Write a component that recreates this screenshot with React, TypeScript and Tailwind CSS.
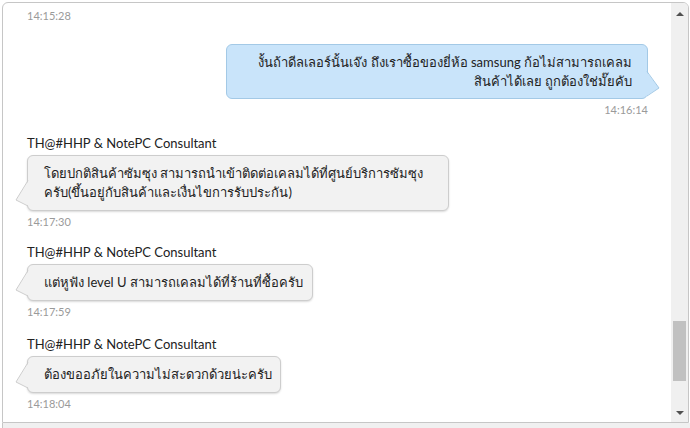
import React from 'react';

const FONT = { fontFamily: 'Lato, "Noto Sans", "Liberation Sans", sans-serif' };

function Stamp({ text, right = false, className = '' }: { text: string; right?: boolean; className?: string }) {
  return (
    <div className={`text-[11px] leading-[13px] text-[#9a9a9a] ${right ? 'text-right' : ''} ${className}`}>{text}</div>
  );
}

function Incoming({ name, lines, time, width }: { name: string; lines: string[]; time: string; width: string }) {
  return (
    <div className="flex flex-col items-start">
      <div className="text-[13px] leading-[16px] text-[#222]">{name}</div>
      <div className={`relative mt-[4px] ${width} rounded-[6px] border border-[#cdcdcd] bg-[#f2f2f2] pl-[16px] py-[8px] text-[13px] leading-[19px] text-[#222] whitespace-nowrap shadow-[0_1px_2px_rgba(0,0,0,0.15)]`}>
        {lines.map((l, i) => (
          <div key={i}>{l}</div>
        ))}
        {/* tail */}
        <svg className="absolute left-[-13px] bottom-[3px]" width="14" height="27" viewBox="0 0 14 27">
          <polygon points="14,0 1,20 14,26" fill="#f2f2f2" />
          <path d="M13 0.5 L1 20 L13 26" fill="none" stroke="#cdcdcd" strokeWidth="1" />
        </svg>
      </div>
      <Stamp text={time} className="mt-[4px]" />
    </div>
  );
}

export default function App() {
  return (
    <div className="w-[690px] h-[428px] bg-white overflow-hidden" style={FONT}>
      <div className="ml-[2px] mt-[2px] w-[687px] h-[421px] flex border border-[#c6c6c6] rounded-t-[6px] overflow-hidden">
        {/* messages */}
        <div className="flex-1 flex flex-col pl-[24px] pr-[20px] pt-[6px]">
          <Stamp text="14:15:28" />

          <div className="mt-[22px] flex flex-col items-end pr-[3px]">
            <div className="relative w-[422px] rounded-[6px] border border-[#a3c9e6] bg-[#c9e4fa] pl-[16px] pr-[15px] pt-[8px] pb-[7px] text-right text-[13px] leading-[19px] text-[#222] whitespace-nowrap">
              <div>งั้นถ้าดีลเลอร์นั้นเจ๊ง ถึงเราซื้อของยี่ห้อ samsung ก้อไม่สามารถเคลม</div>
              <div>สินค้าได้เลย ถูกต้องใช่มั๊ยคับ</div>
              <svg className="absolute right-[-13px] bottom-[1px]" width="14" height="26" viewBox="0 0 14 26">
                <polygon points="0,0 13,17 0,25" fill="#c9e4fa" />
                <path d="M1 0.5 L13 17 L1 25" fill="none" stroke="#a3c9e6" strokeWidth="1" />
              </svg>
            </div>
            <Stamp text="14:16:14" right className="mt-[4px] w-full" />
          </div>

          <div className="mt-[19px]">
            <Incoming
              name="TH@#HHP & NotePC Consultant"
              lines={[
                'โดยปกติสินค้าซัมซุง สามารถนำเข้าติดต่อเคลมได้ที่ศูนย์บริการซัมซุง',
                'ครับ(ขึ้นอยู่กับสินค้าและเงื่นไขการรับประกัน)',
              ]}
              time="14:17:30"
              width="w-[422px]"
            />
          </div>
          <div className="mt-[16px]">
            <Incoming
              name="TH@#HHP & NotePC Consultant"
              lines={['แต่หูฟัง level U สามารถเคลมได้ที่ร้านที่ซื้อครับ']}
              time="14:17:59"
              width="w-[286px]"
            />
          </div>
          <div className="mt-[18px]">
            <Incoming
              name="TH@#HHP & NotePC Consultant"
              lines={['ต้องขออภัยในความไม่สะดวกด้วยน่ะครับ']}
              time="14:18:04"
              width="w-[254px]"
            />
          </div>
        </div>

        {/* scrollbar */}
        <div className="w-[17px] bg-[#f0f0f0] flex flex-col items-center">
          <div className="h-[17px] flex items-center justify-center pt-[5px]">
            <div className="w-0 h-0 border-l-[4px] border-r-[4px] border-b-[4px] border-l-transparent border-r-transparent border-b-[#505050]" />
          </div>
          <div className="flex-1 w-full px-[2px] flex flex-col">
            <div className="flex-1" />
            <div className="h-[60px] bg-[#c1c1c1]" />
            <div className="h-[24px]" />
          </div>
          <div className="h-[17px] flex items-center justify-center pb-[2px]">
            <div className="w-0 h-0 border-l-[4px] border-r-[4px] border-t-[4px] border-l-transparent border-r-transparent border-t-[#505050]" />
          </div>
        </div>
      </div>
      <div className="ml-[2px] h-[5px] bg-[#f0f0f0] border-l border-[#c6c6c6]" />
    </div>
  );
}
